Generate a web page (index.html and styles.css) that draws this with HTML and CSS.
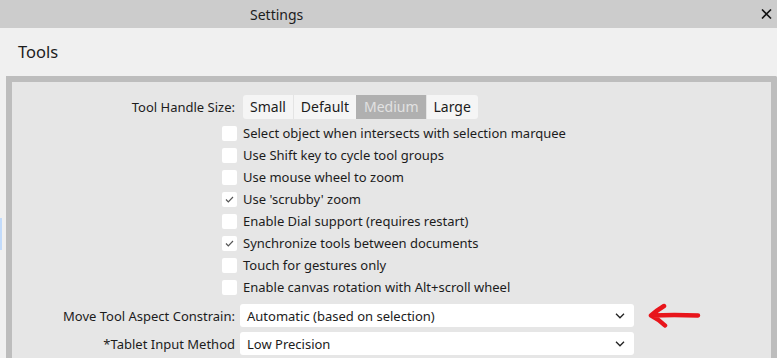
FILE: index.html
```html
<!DOCTYPE html>
<html lang="en">
<head>
    <meta charset="UTF-8">
    <title>Settings</title>
    <link rel="stylesheet" href="styles.css">
</head>
<body>
    <div class="titlebar">
        <span class="title">Settings</span>
        <svg class="close" width="11" height="10" viewBox="0 0 11 10">
            <path d="M1 0.5 L10 9.5 M10 0.5 L1 9.5" stroke="#111" stroke-width="1.6" fill="none"/>
        </svg>
    </div>

    <div class="page">
        <div class="side-mark"></div>
        <h1 class="heading">Tools</h1>

        <div class="panel">
            <div class="row row-seg">
                <label class="label">Tool Handle Size:</label>
                <div class="segmented">
                    <span class="seg">Small</span>
                    <span class="seg">Default</span>
                    <span class="seg active">Medium</span>
                    <span class="seg">Large</span>
                </div>
            </div>

            <div class="checks">
                <div class="check-row"><span class="box"></span>Select object when intersects with selection marquee</div>
                <div class="check-row"><span class="box"></span>Use Shift key to cycle tool groups</div>
                <div class="check-row"><span class="box"></span>Use mouse wheel to zoom</div>
                <div class="check-row">
                    <span class="box"><svg width="15" height="15" viewBox="0 0 15 15"><path d="M4 7.5 L6.3 9.8 L11 5" stroke="#555" stroke-width="1.2" fill="none"/></svg></span>Use 'scrubby' zoom
                </div>
                <div class="check-row"><span class="box"></span>Enable Dial support (requires restart)</div>
                <div class="check-row">
                    <span class="box"><svg width="15" height="15" viewBox="0 0 15 15"><path d="M4 7.5 L6.3 9.8 L11 5" stroke="#555" stroke-width="1.2" fill="none"/></svg></span>Synchronize tools between documents
                </div>
                <div class="check-row"><span class="box"></span>Touch for gestures only</div>
                <div class="check-row"><span class="box"></span>Enable canvas rotation with Alt+scroll wheel</div>
            </div>

            <div class="row row-select first">
                <label class="label">Move Tool Aspect Constrain:</label>
                <div class="select">
                    <span>Automatic (based on selection)</span>
                    <svg width="10" height="6" viewBox="0 0 10 6"><path d="M1 0.8 L5 4.8 L9 0.8" stroke="#222" stroke-width="1.3" fill="none"/></svg>
                </div>
                <svg class="arrow" width="54" height="26" viewBox="0 0 54 26">
                    <path d="M50 12.5 C40 12, 22 11.5, 4 12.5 M16 3 C11 6, 7 9, 3 12.5 C8 15, 13 18.5, 17 22.5" stroke="#e8151b" stroke-width="4.5" stroke-linecap="round" stroke-linejoin="round" fill="none"/>
                </svg>
            </div>

            <div class="row row-select">
                <label class="label">*Tablet Input Method</label>
                <div class="select">
                    <span>Low Precision</span>
                    <svg width="10" height="6" viewBox="0 0 10 6"><path d="M1 0.8 L5 4.8 L9 0.8" stroke="#222" stroke-width="1.3" fill="none"/></svg>
                </div>
            </div>
        </div>
    </div>
</body>
</html>
```

FILE: styles.css
```css
body {
    margin: 0;
    width: 777px;
    height: 358px;
    overflow: hidden;
    background: #f0f0f0;
    font-family: "Noto Sans", sans-serif;
    font-size: 13px;
    color: #1c1c1c;
}
.titlebar {
    height: 28px;
    background: #cccccc;
    display: flex;
    align-items: center;
}
.title {
    margin-left: 250px;
    font-size: 14px;
    flex: 1;
}
.close {
    margin-right: 5px;
}
.page {
    position: relative;
    height: 330px;
}
.side-mark {
    position: absolute;
    left: 0;
    top: 190px;
    width: 2px;
    height: 32px;
    background: #c2dbfb;
}
.heading {
    margin: 0;
    height: 48px;
    padding-left: 18px;
    font-size: 16.5px;
    font-weight: normal;
    line-height: 48px;
}
.panel {
    margin-left: 6px;
    border-top: 6px solid #bdbdbd;
    border-left: 6px solid #bdbdbd;
    border-right: 6px solid #bdbdbd;
    border-top-right-radius: 2px;
    background: #e6e6e6;
    height: 282px;
    padding-top: 13px;
    box-sizing: border-box;
}
.row {
    display: flex;
    align-items: center;
}
.label {
    width: 223px;
    text-align: right;
    flex-shrink: 0;
}
.segmented {
    display: flex;
    margin-left: 8px;
    height: 24px;
    background: #f5f5f5;
    border-radius: 3px;
    overflow: hidden;
}
.seg {
    padding: 0 7px;
    line-height: 24px;
    font-size: 14px;
    border-left: 1px solid #e4e4e4;
}
.seg:first-child {
    border-left: none;
}
.seg.active {
    background: #b0b0b0;
    color: #e2e2e2;
    border-left-color: #b0b0b0;
}
.checks {
    margin-top: 3px;
    padding-left: 210px;
}
.check-row {
    height: 22px;
    display: flex;
    align-items: center;
}
.box {
    width: 15px;
    height: 15px;
    background: #fff;
    border-radius: 2px;
    margin-right: 6px;
    display: flex;
}
.row-select {
    margin-top: 5px;
    height: 23px;
}
.row-select.first {
    margin-top: 6px;
}
.select {
    margin-left: 5px;
    width: 394px;
    height: 23px;
    background: #fff;
    border-radius: 3px;
    display: flex;
    align-items: center;
    justify-content: space-between;
    padding: 0 9px 0 7px;
    box-sizing: border-box;
}
.arrow {
    margin-left: 14px;
}
```
